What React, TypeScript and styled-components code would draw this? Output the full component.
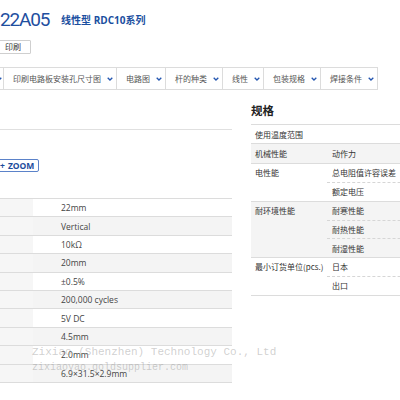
import React from 'react';
import styled, { createGlobalStyle } from 'styled-components';

const GlobalStyle = createGlobalStyle`
  html, body {
    margin: 0;
    padding: 0;
    background: #fff;
  }
  body {
    font-family: "Open Sans", "Noto Sans CJK SC", sans-serif;
    color: #444;
  }
`;

const Page = styled.div`
  position: relative;
  width: 400px;
  height: 400px;
  overflow: hidden;
  padding-top: 6px;
  box-sizing: border-box;
`;

const TitleRow = styled.div`
  display: flex;
  align-items: center;
  height: 26px;
`;

const Title = styled.h1`
  margin: 0;
  font-family: Roboto, "Open Sans", sans-serif;
  font-weight: 400;
  font-size: 19px;
  letter-spacing: -1.2px;
  color: #1f4f9f;
`;

const Series = styled.span`
  margin-left: 12px;
  font-size: 10px;
  font-weight: 700;
  color: #1b4fa0;
  font-family: "Open Sans", "Noto Sans CJK SC", sans-serif;
`;

const PrintButton = styled.button`
  display: block;
  margin: 8px 0 0 -1px;
  width: 32px;
  height: 14px;
  padding: 0 0 0 5px;
  text-align: left;
  border: 1px solid #cfcfcf;
  border-radius: 1px;
  background: #fff;
  color: #333;
  font-family: "Noto Sans CJK SC", sans-serif;
  font-size: 8px;
  line-height: 12px;
`;

const NavBar = styled.nav`
  display: flex;
  margin: 13px 0 0 0;
  height: 23px;
  width: max-content;
  border: 1px solid #dcdcdc;
  border-left: none;
  box-sizing: border-box;
`;

const NavItem = styled.div<{ clipped?: boolean }>`
  display: flex;
  align-items: center;
  gap: 6px;
  padding: ${({ clipped }) => (clipped ? '0 1px 0 0' : '0 3px 0 9px')};
  margin-left: ${({ clipped }) => (clipped ? '-4px' : '0')};
  border-right: 1px solid #dcdcdc;
  font-family: "Noto Sans CJK SC", sans-serif;
  font-size: 8px;
  color: #555;
  &:last-child {
    border-right: none;
  }
`;

const Chevron = () => (
  <svg width="6" height="4" viewBox="0 0 6 4">
    <path d="M0.7 0.7 L3 3 L5.3 0.7" fill="none" stroke="#2456b0" strokeWidth="1.3" />
  </svg>
);

const Main = styled.div`
  display: flex;
  margin-top: 12px;
`;

const LeftColumn = styled.div`
  flex: 0 0 232px;
  padding-top: 27px;
`;

const ZoomArea = styled.div`
  height: 69px;
  border-top: 1px solid #e0e0e0;
  box-sizing: border-box;
  padding-top: 29px;
`;

const ZoomButton = styled.button`
  display: flex;
  align-items: center;
  gap: 3px;
  margin-left: -3px;
  height: 13px;
  padding: 0 4px 0 2px;
  border: 1px solid #5b82c9;
  border-radius: 2px;
  background: #fff;
  color: #1c4c9c;
  font-family: "Open Sans", sans-serif;
  font-weight: 700;
  font-size: 8.5px;
  line-height: 11px;
`;

const DataTable = styled.div`
  border-top: 1px solid #dcdcdc;
`;

const DataRow = styled.div<{ shaded: boolean }>`
  display: grid;
  grid-template-columns: 33px 1fr;
  height: 18.4px;
  box-sizing: border-box;
  border-bottom: 1px solid #dcdcdc;
  background: ${({ shaded }) => (shaded ? '#f4f4f4' : '#fff')};
`;

const DataLabel = styled.div`
  background: #f6f6f6;
`;

const DataValue = styled.div`
  display: flex;
  align-items: center;
  padding-left: 28px;
  font-size: 8.5px;
  color: #444;
`;

const RightColumn = styled.div`
  margin-left: 19px;
  flex: 0 0 200px;
`;

const SpecHeading = styled.h2`
  margin: 0 0 6px 0;
  height: 16px;
  line-height: 16px;
  font-family: "Noto Sans CJK SC", sans-serif;
  font-size: 11.5px;
  font-weight: 700;
  color: #222;
`;

const SpecTable = styled.div`
  border-top: 1px solid #dcdcdc;
`;

const SpecGroup = styled.div<{ shaded: boolean }>`
  display: grid;
  grid-template-columns: 76px 1fr;
  border-bottom: 1px solid #dcdcdc;
  background: ${({ shaded }) => (shaded ? '#f4f4f4' : '#fff')};
`;

const SpecLabel = styled.div`
  height: 18.4px;
  display: flex;
  align-items: center;
  padding-left: 4px;
  font-family: "Noto Sans CJK SC", sans-serif;
  font-size: 8px;
  color: #333;
  white-space: nowrap;
`;

const SpecSubs = styled.div`
  display: flex;
  flex-direction: column;
`;

const SpecSub = styled.div`
  height: 18.4px;
  box-sizing: border-box;
  display: flex;
  align-items: center;
  padding-left: 5px;
  font-family: "Noto Sans CJK SC", sans-serif;
  font-size: 8px;
  color: #333;
  white-space: nowrap;
  & + & {
    border-top: 1px dashed #d6d6d6;
  }
`;

const Watermark = styled.div`
  position: absolute;
  left: 32px;
  top: 345px;
  font-family: "Liberation Mono", monospace;
  color: rgba(150, 150, 150, 0.45);
  pointer-events: none;
  white-space: pre;
`;

const WatermarkLine = styled.div<{ size: number }>`
  font-size: ${({ size }) => size}px;
  line-height: 15px;
`;

const navItems = ['印刷电路板安装孔尺寸图', '电路图', '杆的种类', '线性', '包装规格', '焊接条件'];

const values = [
  '22mm',
  'Vertical',
  '10kΩ',
  '20mm',
  '±0.5%',
  '200,000 cycles',
  '5V DC',
  '4.5mm',
  '2.0mm',
  '6.9×31.5×2.9mm',
];

const specs = [
  { label: '使用温度范围', subs: [''] },
  { label: '机械性能', subs: ['动作力'] },
  { label: '电性能', subs: ['总电阻值许容误差', '额定电压'] },
  { label: '耐环境性能', subs: ['耐寒性能', '耐热性能', '耐湿性能'] },
  { label: '最小订货单位(pcs.)', subs: ['日本', '出口'] },
];

const App: React.FC = () => {
  return (
    <>
      <GlobalStyle />
      <Page>
        <TitleRow>
          <Title>22A05</Title>
          <Series>线性型 RDC10系列</Series>
        </TitleRow>
        <PrintButton>印刷</PrintButton>
        <NavBar>
          {/* the bar is scrolled: only the tail of the first tab shows */}
          <NavItem clipped>
            <Chevron />
          </NavItem>
          {navItems.map(item => (
            <NavItem key={item}>
              {item}
              <Chevron />
            </NavItem>
          ))}
        </NavBar>
        <Main>
          <LeftColumn>
            <ZoomArea>
              <ZoomButton>
                <span>+</span>
                <span>ZOOM</span>
              </ZoomButton>
            </ZoomArea>
            <DataTable>
              {values.map((v, i) => (
                <DataRow key={v} shaded={i % 2 === 1}>
                  <DataLabel />
                  <DataValue>{v}</DataValue>
                </DataRow>
              ))}
            </DataTable>
          </LeftColumn>
          <RightColumn>
            <SpecHeading>规格</SpecHeading>
            <SpecTable>
              {specs.map((g, i) => (
                <SpecGroup key={g.label} shaded={i % 2 === 1}>
                  <SpecLabel>{g.label}</SpecLabel>
                  <SpecSubs>
                    {g.subs.map((s, j) => (
                      <SpecSub key={j}>{s}</SpecSub>
                    ))}
                  </SpecSubs>
                </SpecGroup>
              ))}
            </SpecTable>
          </RightColumn>
        </Main>
        <Watermark>
          <WatermarkLine size={11}>Zixiao (Shenzhen) Technology Co., Ltd</WatermarkLine>
          <WatermarkLine size={10}>zixiaoyao.goldsupplier.com</WatermarkLine>
        </Watermark>
      </Page>
    </>
  );
};

export default App;
